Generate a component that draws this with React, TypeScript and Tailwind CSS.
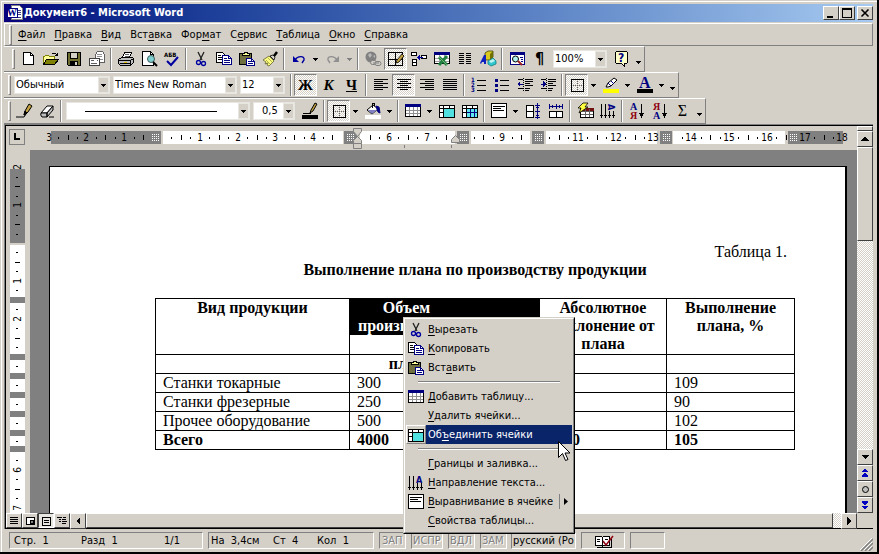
import type { ReactNode } from 'react'
import { clsx } from 'clsx'

const RAISED = 'border border-t-white border-l-white border-r-[#404040] border-b-[#404040]'
const DITHER =
  'bg-[conic-gradient(#fff_25%,#d4d0c8_0_50%,#fff_0_75%,#d4d0c8_0)] bg-[length:2px_2px]'

function Icon({ children, smooth }: { children: ReactNode; smooth?: boolean }) {
  return (
    <svg
      viewBox="0 0 16 16"
      className="w-4 h-4 shrink-0 overflow-visible"
      fill="none"
      stroke="#000"
      shapeRendering={smooth ? 'auto' : 'crispEdges'}
      aria-hidden="true"
    >
      {children}
    </svg>
  )
}

const NewIcon = () => (
  <Icon>
    <path d="M3.5 1.5h7l3 3v9h-10z" fill="#fff" />
    <path d="M10.5 1.5v3h3" />
  </Icon>
)

const OpenIcon = () => (
  <Icon>
    <path d="M.5 13.5v-8h1l1-1h3l1 1h5v3" fill="#ffff99" stroke="#808000" />
    <path d="M.5 13.5l3-5h12l-4 5z" fill="#808000" />
    <path d="M8.5 3.5l1-1h3l1 1v1M14.5 1.5v3h-3" />
  </Icon>
)

const SaveIcon = () => (
  <Icon>
    <path d="M1.5 1.5h13v13h-12l-1-1z" fill="#706f30" />
    <path d="M4.5 1.5h7v6h-7z" fill="#d4d0c8" />
    <path d="M4 10h8v4h-8z" fill="#000" stroke="none" />
    <path d="M9 11h2v3h-2z" fill="#d4d0c8" stroke="none" />
  </Icon>
)

const MailIcon = () => (
  <Icon>
    <path d="M6.5 7.5v-4l2-3h5l2 3v8h-9z" fill="#fff" stroke="#606060" />
    <path d="M8 3.5h5M8 5.5h5M11 8.5h3" stroke="#909090" />
    <path d="M.5 7.5h10v7h-10z" fill="#fff" stroke="#404040" />
    <path d="M2 9.5h3M2 12.5h6M8 9.5h1" stroke="#606060" />
  </Icon>
)

const PrintIcon = () => (
  <Icon>
    <path d="M4.5 6.5l2-5h7l-2 5z" fill="#fff" />
    <path d="M7 3.5h4M6.5 5.5h4" stroke="#606060" />
    <path d="M.5 8.5l3-2h11l1 1v4l-3 3h-10l-2-2z" fill="#c0c0c0" />
    <path d="M1 9.5h11v4M12.5 9.5l3-2M2 12.5h10" />
    <path d="M6 11.5h3" stroke="#e0c000" />
  </Icon>
)

const PreviewIcon = () => (
  <Icon>
    <path d="M1.5.5h8l3 3v11h-11z" fill="#fff" />
    <path d="M9.5.5v3h3" />
    <circle cx="10" cy="8" r="3.5" fill="#80d0d0" stroke="#406060" shapeRendering="auto" />
    <path d="M12 11l4 4" strokeWidth="2" shapeRendering="auto" />
  </Icon>
)

const SpellIcon = () => (
  <Icon smooth>
    <text x="0" y="6" fontSize="6" fontWeight="bold" fill="#000" stroke="none">
      АБВ
    </text>
    <path d="M3 10l4 4 7-8" stroke="#0000a0" strokeWidth="2" />
  </Icon>
)

const CutIcon = () => (
  <Icon smooth>
    <path d="M5 1l4 8M11 1l-4 8" stroke="#202020" strokeWidth="1.3" />
    <circle cx="5.5" cy="11.5" r="2" stroke="#0000a0" strokeWidth="1.3" />
    <circle cx="10.5" cy="12.5" r="2" stroke="#0000a0" strokeWidth="1.3" />
  </Icon>
)

const CopyIcon = () => (
  <Icon>
    <path d="M.5 1.5h6l2 2v8h-8z" fill="#fff" />
    <path d="M2 4.5h3M2 6.5h4M2 8.5h4" />
    <path d="M6.5 4.5h6l3 3v6h-9z" fill="#fff" stroke="#000080" />
    <path d="M12.5 4.5v3h3M8 7.5h3M8 9.5h6M8 11.5h6" stroke="#000080" />
  </Icon>
)

const PasteIcon = () => (
  <Icon>
    <path d="M.5 2.5h12v11h-12z" fill="#706f40" />
    <path d="M3.5 4.5v-2h2v-1h3v1h2v2z" fill="#ffff99" />
    <path d="M7.5 7.5h5l3 3v4h-8z" fill="#fff" stroke="#000080" />
    <path d="M9 10.5h3M9 12.5h5M12.5 7.5v3h3" stroke="#000080" />
  </Icon>
)

const BrushIcon = () => (
  <Icon smooth>
    <path d="M1 9l6-4 5 5-5 5-2-1 1-2-3 1 1-2z" fill="#ffff80" stroke="#606030" strokeWidth=".8" />
    <path d="M4 9l4 4M6 7l4 4" stroke="#a0a040" strokeWidth=".8" />
    <path d="M8 5l4 4 1-3-2-2z" fill="#d4d0c8" stroke="#000" strokeWidth=".8" />
    <path d="M12 5l3-4" strokeWidth="2.5" />
  </Icon>
)

function TurnIcon({ color, flip }: { color: string; flip?: boolean }) {
  return (
    <Icon smooth>
      <g transform={flip ? 'matrix(-1 0 0 1 16 0)' : undefined} stroke={color}>
        <path d="M4 9c3-5 10-4 9 0l-2 3" strokeWidth="1.4" />
        <path d="M2 5v6h6z" fill={color} stroke="none" />
      </g>
    </Icon>
  )
}

const LinkIcon = () => (
  <Icon smooth>
    <circle cx="6" cy="6" r="5.5" fill="#808080" stroke="none" />
    <path d="M3 4l2-2 2 2-2 3zM8 5l2-1v3z" fill="#b8b8b8" stroke="none" />
    <rect x="5.5" y="9.5" width="6" height="4" rx="2" fill="#d4d0c8" stroke="#808080" />
    <rect x="10" y="10.5" width="6" height="4" rx="2" fill="#d4d0c8" stroke="#808080" />
    <path d="M8 12h6" stroke="#808080" />
  </Icon>
)

const DrawTableIcon = () => (
  <Icon>
    <path d="M.5 1.5h14v13h-14zM.5 8.5h14M7.5 1.5v13" />
    <path d="M8 12l1-3 5-6 2 2-5 6z" fill="#c0a040" stroke="#000" strokeWidth=".8" shapeRendering="auto" />
  </Icon>
)

const InsertRowsIcon = () => (
  <Icon>
    <path d="M.5 1.5h5v3h-5zM1.5 8.5h4v3h-4zM1.5 11.5h4v3h-4z" fill="#fff" />
    <path d="M10.5 4.5h5v3h-5z" fill="#fff" />
    <path d="M7 6.5h5" stroke="#0000a0" />
    <path d="M6 6.5l3-3v6z" fill="#0000a0" stroke="none" />
  </Icon>
)

const ExcelIcon = () => (
  <Icon>
    <path d="M.5 1.5h15v11h-15z" fill="#fff" />
    <path d="M0 1h16v3h-16z" fill="#000080" stroke="none" />
    <path d="M1 7.5h14M1 10.5h14M5.5 4v8M10.5 4v8" stroke="#a0a0a0" />
    <path d="M5 6l8 8M13 5l-8 9" stroke="#208040" strokeWidth="3" shapeRendering="auto" />
    <path d="M5 6l8 8" stroke="#70b070" shapeRendering="auto" />
  </Icon>
)

const ColumnsIcon = () => (
  <Icon>
    <path d="M2 2.5h5M2 4.5h5M2 6.5h5M2 8.5h5M2 10.5h5M2 12.5h5M9 2.5h5M9 4.5h5M9 6.5h5M9 8.5h5M9 10.5h5M9 12.5h5" />
  </Icon>
)

const DrawingIcon = () => (
  <Icon smooth>
    <path d="M5 2l3-2h5v6l-3 3h-5z" fill="#d8c820" stroke="#404000" strokeWidth=".8" />
    <path d="M10 3l3-3v6l-3 3z" fill="#707000" stroke="none" />
    <path d="M0 12l4-8h2v9h-2v-2h-2l-1 2z" fill="#1020c0" stroke="none" />
    <path d="M8 10l5-3 3 3v3l-5 2-3-2z" fill="#30c8d0" stroke="#108080" strokeWidth=".8" />
    <path d="M9 10l4-2 2 2-4 2z" fill="#c0f0f0" stroke="none" />
  </Icon>
)

const DocMapIcon = () => (
  <Icon>
    <path d="M1.5 1.5h14v12h-14z" fill="#fff" stroke="#000080" />
    <path d="M1 1h15v3h-15z" fill="#000080" stroke="none" />
    <path d="M11 6.5h3M12 8.5h2M12 10.5h2" stroke="#000080" />
    <circle cx="6.5" cy="8" r="3" fill="#b0f0f0" shapeRendering="auto" />
    <path d="M9 10l4 4" stroke="#a02020" strokeWidth="2" shapeRendering="auto" />
  </Icon>
)

const HelpIcon = () => (
  <Icon>
    <path d="M2.5.5h10l1 1v10l-1 1h-2v3l-3-3h-5l-1-1v-10z" fill="#ffffcc" />
    <text x="4" y="11" fontSize="12" fontWeight="bold" fill="#000080" stroke="none">
      ?
    </text>
  </Icon>
)

function LinesIcon({ rows }: { rows: [number, number][] }) {
  return (
    <Icon>
      {rows.map(([x, w], i) => (
        <path key={i} d={`M${x} ${i * 2 + 2.5}h${w}`} />
      ))}
    </Icon>
  )
}

const NumberedIcon = () => (
  <Icon>
    <path d="M6 3.5h9M6 8.5h9M6 13.5h9" />
    <g fontSize="6" fontWeight="bold" fill="#000080" stroke="none">
      <text x="0" y="5">1</text>
      <text x="0" y="10">2</text>
      <text x="0" y="15">3</text>
    </g>
  </Icon>
)

const BulletsIcon = () => (
  <Icon>
    <path d="M6 3.5h9M6 8.5h9M6 13.5h9" />
    <path d="M1 2h3v3h-3zM1 7h3v3h-3zM1 12h3v3h-3z" fill="#000080" stroke="none" />
  </Icon>
)

function IndentIcon({ right }: { right?: boolean }) {
  return (
    <Icon>
      <path d="M1 2.5h5M8 2.5h8M8 4.5h8M8 6.5h5M8 8.5h8M1 11.5h5M8 11.5h5M8 13.5h4" />
      <path d="M6.5 1v14" strokeDasharray="1 1" />
      <path d="M1 7h5" stroke="#000080" />
      <path d={right ? 'M6 7l-3-3v6z' : 'M0 7l3-3v6z'} fill="#000080" stroke="none" />
    </Icon>
  )
}

const BordersIcon = () => (
  <Icon>
    <path d="M2.5 2.5h12v12h-12z" />
    <path d="M8.5 4v10M4 8.5h10" stroke="#606060" strokeDasharray="1 1" />
  </Icon>
)

const HighlightIcon = () => (
  <Icon>
    <path d="M0 12h16v4h-16z" fill="#ffff00" stroke="none" />
    <path d="M3 10l2-4 6-5 3 2-6 6-3 1z" fill="#fff" stroke="#000" shapeRendering="auto" />
    <path d="M5 6l3 3M8 4l3 3" stroke="#000080" shapeRendering="auto" />
  </Icon>
)

const FontColorIcon = () => (
  <Icon>
    <path d="M0 12h16v4h-16z" fill="#000" stroke="none" />
    <text x="2" y="11" fontSize="16" fontWeight="bold" fontFamily="Liberation Serif" fill="#000080" stroke="none">
      А
    </text>
  </Icon>
)

const PencilIcon = () => (
  <Icon smooth>
    <path d="M8 12l1-4 4-7 3 2-4 6-3 3z" fill="#c0a040" />
    <path d="M8 12l1-4 2 2z" fill="#000" />
    <path d="M0 14h8l2-3" />
  </Icon>
)

const EraserIcon = () => (
  <Icon smooth>
    <path d="M2 10l6-7h6l-6 7z" fill="#fff" />
    <path d="M2 10h6v4h-5q-2-2-1-4zM8 10l6-7v4l-6 7z" fill="#c0c0c0" />
    <path d="M10 14h5" />
  </Icon>
)

const PenColorIcon = () => (
  <Icon>
    <path d="M0 12h16v4h-16z" fill="#000" stroke="none" />
    <path d="M1 10.5h8" />
    <path d="M8 10l1-3 4-7 2 1-4 7z" fill="#c0a040" shapeRendering="auto" />
  </Icon>
)

const FillIcon = () => (
  <Icon>
    <path d="M0 12h16v4h-16z" fill="#fff" stroke="none" />
    <path d="M2 7l6-5 5 4-6 5z" fill="#fff" shapeRendering="auto" />
    <path d="M3 7h9l-5 4z" fill="#8080c0" stroke="none" shapeRendering="auto" />
    <path d="M7 5v-5h2v3" />
    <path d="M11 3l3 1 1 6-2-1-1-3z" fill="#000080" stroke="#000080" shapeRendering="auto" />
  </Icon>
)

const TableIcon = () => (
  <Icon>
    <path d="M.5 1.5h15v12h-15z" fill="#fff" />
    <path d="M0 1h16v3h-16z" fill="#000080" stroke="none" />
    <path d="M1 7.5h14M1 10.5h14M4.5 4v9M8.5 4v9M12.5 4v9" stroke="#909090" />
  </Icon>
)

const MergeIcon = () => (
  <Icon>
    <path d="M.5 2.5h15v12h-15z" fill="#fff" />
    <path d="M.5 5.5h15M4.5 2.5v12M10.5 2v3M1 9.5h3" />
    <path d="M5 6h10v8h-10z" fill="#50e0e0" stroke="none" />
  </Icon>
)

const SplitIcon = () => (
  <Icon>
    <path d="M.5 2.5h15v12h-15z" fill="#fff" />
    <path d="M5 6h10v8h-10z" fill="#60e8f0" stroke="none" />
    <path d="M.5 5.5h15M4.5 2.5v12M10.5 2v3M1 9.5h3" />
    <path d="M5 9.5h10M8.5 6v8M12.5 6v8" stroke="#000080" />
  </Icon>
)

const CellAlignIcon = () => (
  <Icon>
    <path d="M.5.5h15v14h-15z" fill="#fff" />
    <path d="M2 3.5h12M2 5.5h8M2 7.5h11" />
  </Icon>
)

const EvenRowsIcon = () => (
  <Icon>
    <path d="M1.5 2.5h7v12h-7zM1.5 8.5h7" fill="#fff" />
    <path d="M10 2.5h5M10 8.5h5M10 14.5h5M12.5 0v16" stroke="#000080" />
    <path d="M11 4.5h3M11 12.5h3" stroke="#000080" />
  </Icon>
)

const EvenColumnsIcon = () => (
  <Icon>
    <path d="M1.5 8.5h13v6h-13zM8.5 8.5v6" fill="#fff" />
    <path d="M1.5 1v5M8.5 1v5M14.5 1v5M2 3.5h12M4.5 2v3M11.5 2v3" stroke="#000080" />
  </Icon>
)

const AutoFormatIcon = () => (
  <Icon>
    <path d="M3.5 5.5h13v9h-13z" fill="#fff" />
    <path d="M4 5h13v3h-13z" fill="#701010" stroke="none" />
    <path d="M4 8.5h12M4 11.5h12M8.5 6v8M12.5 6v8" stroke="#606060" />
    <path d="M6 0h5l-3 4h3l-9 6 2-5h-3z" fill="#ffff40" strokeWidth=".8" shapeRendering="auto" />
  </Icon>
)

function DirectionIcon({ turned }: { turned?: boolean }) {
  return (
    <Icon>
      <path d="M1.5 1v12M5.5 1v12M9.5 8v5M13.5 8v5" />
      <path d="M0 12h3l-1.5 3zM4 12h3l-1.5 3zM8 12h3l-1.5 3zM12 12h3l-1.5 3z" fill="#000" stroke="none" />
      <text
        transform={turned ? 'translate(8 1) rotate(90)' : 'translate(8 8)'}
        fontSize="9"
        fontWeight="bold"
        fill="#000080"
        stroke="none"
      >
        А
      </text>
    </Icon>
  )
}

function SortIcon({ top, bottom }: { top: string; bottom: string }) {
  return (
    <Icon>
      <g fontSize="10" fontWeight="bold" fontFamily="Liberation Serif" stroke="none">
        <text x="1" y="7" fill={top === 'А' ? '#000080' : '#900010'}>
          {top}
        </text>
        <text x="1" y="16" fill={bottom === 'А' ? '#000080' : '#900010'}>
          {bottom}
        </text>
      </g>
      <path d="M12.5 1v11" />
      <path d="M10 10h5l-2.5 5z" fill="#000" stroke="none" />
    </Icon>
  )
}

function Arrow({ light }: { light?: boolean }) {
  return (
    <svg viewBox="0 0 5 3" className="w-[5px] h-[3px]" shapeRendering="crispEdges" aria-hidden="true">
      <path d="M0 0h5v1h-1v1h-1v1h-1v-1h-1v-1h-1z" fill={light ? '#808080' : '#000'} />
    </svg>
  )
}

function Tool({ label, pressed, children }: { label: string; pressed?: boolean; children: ReactNode }) {
  return (
    <button
      type="button"
      aria-label={label}
      aria-pressed={pressed}
      className={clsx(
        'w-[23px] h-[22px] flex items-center justify-center border shrink-0',
        pressed
          ? `border-t-[#808080] border-l-[#808080] border-r-white border-b-white ${DITHER}`
          : 'border-transparent',
      )}
    >
      {children}
    </button>
  )
}

function Drop({ label, light }: { label: string; light?: boolean }) {
  return (
    <button type="button" aria-label={label} className="w-[11px] h-[22px] flex items-center justify-center shrink-0">
      <Arrow light={light} />
    </button>
  )
}

const Sep = () => <span className="w-0.5 h-[22px] mx-0.5 shrink-0 border-l border-[#808080] border-r border-r-white" />

const Grip = () => (
  <span className="w-[3px] h-[20px] mr-px shrink-0 border border-t-white border-l-white border-r-[#808080] border-b-[#808080]" />
)

const More = () => (
  <button type="button" aria-label="Другие кнопки" className="w-[11px] h-[22px] flex items-end justify-center pb-1.5">
    <Arrow />
  </button>
)

function Bar({ label, children }: { label: string; children: ReactNode }) {
  return (
    <div
      role="toolbar"
      aria-label={label}
      className="w-fit h-[26px] flex items-center pl-1 border-t border-r border-b border-t-white border-r-[#808080] border-b-[#808080]"
    >
      {children}
    </div>
  )
}

function Combo({
  label,
  value,
  className,
  children,
}: {
  label: string
  value: string
  className: string
  children?: ReactNode
}) {
  return (
    <label className={clsx('grid h-[18px] mr-[3px] shrink-0 bg-white border border-[#e8e6e0]', className)}>
      <select aria-label={label} className="appearance-none col-start-1 row-start-1 pl-px w-full outline-none">
        <option>{value}</option>
      </select>
      {children}
      <span className="col-start-1 row-start-1 justify-self-end w-[11px] bg-[#d4d0c8] border border-[#e8e6e0] flex items-center justify-center pointer-events-none">
        <Arrow />
      </span>
    </label>
  )
}

// Marks the access key of a caption, e.g. "Вст_авка"
function Caption({ text }: { text: string }) {
  const at = text.indexOf('_')
  return (
    <span className="whitespace-pre">
      {text.slice(0, at)}
      <u className="underline-offset-2">{text[at + 1]}</u>
      {text.slice(at + 2)}
    </span>
  )
}

const menus = ['_Файл', '_Правка', '_Вид', 'Вст_авка', 'Фор_мат', 'С_ервис', '_Таблица', '_Окно', '_Справка']

function TitleBar() {
  const box = `w-4 h-[14px] bg-[#d4d0c8] flex items-center justify-center ${RAISED}`
  return (
    <header className="h-[18px] flex items-center pl-[3px] bg-linear-to-r from-[#08007c] to-[#a6caf0] text-white">
      <Icon>
        <path d="M4.5.5h8l3 3v11h-11z" fill="#fff" stroke="#808080" />
        <path d="M10 5.5h4M10 7.5h4M10 9.5h4M6 12.5h8" stroke="#404080" />
        <path d="M0 3h10v9h-10z" fill="#fff" stroke="#000080" />
        <text x="0" y="11" fontSize="10" fontWeight="bold" fontFamily="Liberation Serif" fill="#000080" stroke="none">
          W
        </text>
      </Icon>
      <h1 className="flex-1 pl-px font-bold">Документ6 - Microsoft Word</h1>
      <button type="button" aria-label="Свернуть" className={box}>
        <Icon>
          <path d="M4 11h6v2h-6z" fill="#000" stroke="none" />
        </Icon>
      </button>
      <button type="button" aria-label="Развернуть" className={box}>
        <Icon>
          <path d="M3.5 3.5h9v9h-9zM3 4.5h10" />
        </Icon>
      </button>
      <button type="button" aria-label="Закрыть" className={`ml-0.5 ${box}`}>
        <Icon smooth>
          <path d="M4.5 4.5l7 7M11.5 4.5l-7 7" strokeWidth="1.6" />
        </Icon>
      </button>
    </header>
  )
}

function Toolbars() {
  return (
    <>
      <Bar label="Стандартная">
        <span className="w-1" />
        <Grip />
        <Tool label="Создать"><NewIcon /></Tool>
        <Tool label="Открыть"><OpenIcon /></Tool>
        <Tool label="Сохранить"><SaveIcon /></Tool>
        <Tool label="Сообщение"><MailIcon /></Tool>
        <Sep />
        <Tool label="Печать"><PrintIcon /></Tool>
        <Tool label="Просмотр"><PreviewIcon /></Tool>
        <Tool label="Правописание"><SpellIcon /></Tool>
        <Sep />
        <Tool label="Вырезать"><CutIcon /></Tool>
        <Tool label="Копировать"><CopyIcon /></Tool>
        <Tool label="Вставить"><PasteIcon /></Tool>
        <Tool label="Формат по образцу"><BrushIcon /></Tool>
        <Sep />
        <Tool label="Отменить"><TurnIcon color="#0000a0" /></Tool>
        <Drop label="Список отмены" />
        <Tool label="Вернуть"><TurnIcon color="#909090" flip /></Tool>
        <Drop label="Список возврата" light />
        <Sep />
        <Tool label="Гиперссылка"><LinkIcon /></Tool>
        <Tool label="Таблицы и границы" pressed><DrawTableIcon /></Tool>
        <Tool label="Добавить строки"><InsertRowsIcon /></Tool>
        <Tool label="Таблица Excel"><ExcelIcon /></Tool>
        <Tool label="Колонки"><ColumnsIcon /></Tool>
        <Tool label="Рисование"><DrawingIcon /></Tool>
        <Sep />
        <Tool label="Схема документа"><DocMapIcon /></Tool>
        <Tool label="Непечатаемые знаки"><span className="text-[16px] font-bold">¶</span></Tool>
        <span className="w-0.5" />
        <Combo label="Масштаб" value="100%" className="w-[54px]" />
        <Tool label="Справка"><HelpIcon /></Tool>
        <More />
      </Bar>

      <Bar label="Форматирование">
        <Grip />
        <span className="w-0.5" />
        <Combo label="Стиль" value="Обычный" className="w-[96px]" />
        <Combo label="Шрифт" value="Times New Roman" className="w-[124px]" />
        <Combo label="Размер" value="12" className="w-[45px]" />
        <Sep />
        <Tool label="Полужирный" pressed><b className="text-[15px] font-[Liberation_Serif]">Ж</b></Tool>
        <Tool label="Курсив"><b className="text-[15px] italic font-[Liberation_Serif]">К</b></Tool>
        <Tool label="Подчеркнутый"><b className="text-[15px] underline font-[Liberation_Serif]">Ч</b></Tool>
        <Sep />
        <Tool label="По левому краю">
          <LinesIcon rows={[[1, 14], [1, 9], [1, 14], [1, 9], [1, 14], [1, 9]]} />
        </Tool>
        <Tool label="По центру" pressed>
          <LinesIcon rows={[[1, 14], [4, 8], [1, 14], [4, 8], [1, 14], [4, 8]]} />
        </Tool>
        <Tool label="По правому краю">
          <LinesIcon rows={[[1, 14], [6, 9], [1, 14], [6, 9], [1, 14], [6, 9]]} />
        </Tool>
        <Tool label="По ширине">
          <LinesIcon rows={[[1, 14], [1, 14], [1, 14], [1, 14], [1, 14], [1, 14]]} />
        </Tool>
        <Sep />
        <Tool label="Нумерация"><NumberedIcon /></Tool>
        <Tool label="Маркеры"><BulletsIcon /></Tool>
        <Tool label="Уменьшить отступ"><IndentIcon /></Tool>
        <Tool label="Увеличить отступ"><IndentIcon right /></Tool>
        <Sep />
        <Tool label="Внешние границы" pressed><BordersIcon /></Tool>
        <Drop label="Виды границ" />
        <Tool label="Выделение цветом"><HighlightIcon /></Tool>
        <Drop label="Цвет выделения" />
        <Tool label="Цвет шрифта"><FontColorIcon /></Tool>
        <Drop label="Выбор цвета шрифта" />
        <More />
      </Bar>

      <Bar label="Таблицы и границы">
        <Grip />
        <Tool label="Нарисовать таблицу"><PencilIcon /></Tool>
        <Tool label="Ластик"><EraserIcon /></Tool>
        <Sep />
        <span className="w-0.5" />
        <Combo label="Тип линии" value="" className="w-[184px]">
          <span className="col-start-1 row-start-1 self-center h-px ml-[18px] mr-8 bg-black pointer-events-none" />
        </Combo>
        <Combo label="Толщина линии" value="0,5" className="w-[42px] [&_select]:pl-2" />
        <Tool label="Цвет границы"><PenColorIcon /></Tool>
        <Sep />
        <Tool label="Границы" pressed><BordersIcon /></Tool>
        <Drop label="Выбор границ" />
        <Tool label="Цвет заливки"><FillIcon /></Tool>
        <Drop label="Выбор заливки" />
        <Sep />
        <Tool label="Добавить таблицу"><TableIcon /></Tool>
        <Drop label="Варианты добавления" />
        <Tool label="Объединить ячейки"><MergeIcon /></Tool>
        <Tool label="Разбить ячейки"><SplitIcon /></Tool>
        <Sep />
        <Tool label="Выравнивание"><CellAlignIcon /></Tool>
        <Drop label="Варианты выравнивания" />
        <Tool label="Выровнять высоту строк"><EvenRowsIcon /></Tool>
        <Tool label="Выровнять ширину столбцов"><EvenColumnsIcon /></Tool>
        <Sep />
        <Tool label="Автоформат"><AutoFormatIcon /></Tool>
        <Tool label="Направление текста"><DirectionIcon turned /></Tool>
        <Sep />
        <Tool label="По возрастанию"><SortIcon top="А" bottom="Я" /></Tool>
        <Tool label="По убыванию"><SortIcon top="Я" bottom="А" /></Tool>
        <Tool label="Автосумма"><span className="text-[16px] font-[Liberation_Serif]">Σ</span></Tool>
        <More />
      </Bar>
    </>
  )
}

// One centimetre of the ruler, in pixels
const CM = 37.8

function Grid({ x }: { x: number }) {
  return (
    <path
      d={`M${x} 8.5h8M${x} 10.5h8M${x} 12.5h8M${x} 14.5h8`}
      stroke="#fff"
      strokeDasharray="1 1"
      shapeRendering="crispEdges"
    />
  )
}

function HorizontalRuler() {
  const zero = 132
  const white = [[133, 180], [330, 95], [441, 59], [516, 111], [643, 112]]
  const gray = [[21, 110], [314, 14], [427, 12], [502, 12], [630, 12], [758, 55]]
  const hidden = [[121, 135], [312, 338], [420, 440], [500, 516], [630, 642], [758, 768]]
  const marks = Array.from({ length: 85 }, (_, i) => i - 12)
  return (
    <svg className="flex-1 h-6" aria-hidden="true">
      {white.map(([x, w]) => <rect key={x} x={x} y="5" width={w} height="13" fill="#fff" />)}
      {gray.map(([x, w]) => <rect key={x} x={x} y="5" width={w} height="13" fill="#808080" />)}
      {marks.map((i) => {
        const x = Math.round(zero + (i * CM) / 4)
        if (hidden.some(([a, b]) => x >= a && x <= b)) return null
        if (i % 4 === 0) {
          return <text key={i} x={x} y="15" fontSize="10" textAnchor="middle">{Math.abs(i / 4)}</text>
        }
        return i % 2 === 0
          ? <rect key={i} x={x} y="9" width="1" height="5" />
          : <rect key={i} x={x} y="11" width="1" height="2" />
      })}
      {[122, 317, 430, 505, 633, 760].map((x) => <Grid key={x} x={x} />)}
      <g fill="#d4d0c8" stroke="#808080">
        <path d="M323.5 2.5h8v3l-4 5 4 4v3h-8v-3l4-4-4-5z" />
        <path d="M323.5 17.5h8v5h-8z" />
        <path d="M421.5 16.5v-3l4-4 4 4v3z" />
      </g>
      <path d="M374.5 19v3M421.5 19v3" stroke="#808080" />
    </svg>
  )
}

function VerticalRuler() {
  const zero = 93
  const bars = [147, 204, 223, 242, 261, 280, 296]
  const marks = Array.from({ length: 37 }, (_, i) => i - 8)
  return (
    <svg className="w-[15px] h-full overflow-visible" aria-hidden="true">
      <rect y="19" width="15" height="74" fill="#808080" />
      <rect y="95" width="15" height="268" fill="#fff" />
      {marks.map((i) => {
        const y = Math.round(zero + (i * CM) / 4)
        if (i === 0 || bars.some((b) => y >= b - 2 && y <= b + 7)) return null
        if (i % 4 === 0) {
          return (
            <text key={i} transform={`translate(11 ${y}) rotate(-90)`} fontSize="10" textAnchor="middle">
              {Math.abs(i / 4)}
            </text>
          )
        }
        return i % 2 === 0
          ? <rect key={i} x="5" y={y} width="5" height="1" />
          : <rect key={i} x="6" y={y} width="2" height="1" />
      })}
      {bars.map((y) => <rect key={y} y={y} width="15" height="6" fill="#808080" />)}
    </svg>
  )
}

const rows = [
  ['Станки токарные', '300', '', '', '109'],
  ['Станки фрезерные', '250', '', '', '90'],
  ['Прочее оборудование', '500', '', '', '102'],
  ['Всего', '4000', '', '+200', '105'],
]

function Page() {
  const cell = 'border border-black align-top p-0'
  return (
    <main className="flex-1 ml-[19px] mr-[11px] mt-4 pt-[76px] pl-[105px] pr-[50px] bg-white border-t border-l border-r-2 border-black font-[Liberation_Serif] text-[16px] leading-[18px]">
      <p className="text-right pr-2">Таблица 1.</p>
      <h2 className="text-center font-bold mb-[19px]">Выполнение плана по производству продукции</h2>
      <table className="w-full table-fixed border-collapse">
        <colgroup>
          <col className="w-[194px]" />
          <col className="w-[114px]" />
          <col className="w-[76px]" />
          <col className="w-[127px]" />
          <col className="w-[128px]" />
        </colgroup>
        <thead>
          <tr className="h-14">
            <th className={cell}>Вид продукции</th>
            <th className={`${cell} text-white`}>
              <div className="bg-black h-9 overflow-hidden px-2">Объем производства</div>
            </th>
            <th className={cell}>
              <div className="bg-black h-9" />
            </th>
            <th className={cell}>Абсолютное отклонение от плана</th>
            <th className={`${cell} px-2`}>Выполнение плана, %</th>
          </tr>
          <tr className="h-[19px]">
            <th className={cell} />
            <th className={cell}>план</th>
            <th className={cell} />
            <th className={cell} />
            <th className={cell} />
          </tr>
        </thead>
        <tbody>
          {rows.map((row) => (
            <tr key={row[0]} className="h-[19px] last:font-bold">
              {row.map((value, i) => (
                <td key={i} className={`${cell} pl-[7px]`}>{value}</td>
              ))}
            </tr>
          ))}
        </tbody>
      </table>
    </main>
  )
}

function ScrollButton({ label, d, color = '#000' }: { label: string; d: string; color?: string }) {
  return (
    <button
      type="button"
      aria-label={label}
      className={`w-4 h-4 shrink-0 bg-[#d4d0c8] flex items-center justify-center ${RAISED}`}
    >
      <Icon>
        <path d={d} fill={color} stroke="none" />
      </Icon>
    </button>
  )
}

function VerticalScroll() {
  return (
    <div className={`w-4 shrink-0 flex flex-col ${DITHER}`}>
      <div className={`h-[5px] shrink-0 bg-[#d4d0c8] ${RAISED}`} />
      <ScrollButton label="Вверх" d="M8 5l4 5h-8z" />
      <div className={`h-[94px] shrink-0 bg-[#d4d0c8] ${RAISED}`} />
      <div className="flex-1" />
      <ScrollButton label="Вниз" d="M4 6h8l-4 4z" />
      <ScrollButton label="Предыдущая страница" d="M8 3l3 4h-6zM8 7l3 4h-6zM5 11h6v1h-6z" color="#0000c0" />
      <button
        type="button"
        aria-label="Выбор объекта перехода"
        className={`w-4 h-4 shrink-0 bg-[#d4d0c8] flex items-center justify-center ${RAISED}`}
      >
        <span className="w-[7px] h-[7px] rounded-full border border-black bg-[#c0c0c0]" />
      </button>
      <ScrollButton label="Следующая страница" d="M5 4h6v1h-6zM5 5h6l-3 4zM5 9h6l-3 4z" color="#0000c0" />
    </div>
  )
}

function ViewButton({ label, on, children }: { label: string; on?: boolean; children: ReactNode }) {
  return (
    <button
      type="button"
      aria-label={label}
      aria-pressed={on}
      className={clsx(
        'w-4 h-[15px] flex items-center justify-center',
        on ? 'border border-t-[#404040] border-l-[#404040] border-r-white border-b-white bg-[#e8e6e0]' : RAISED,
      )}
    >
      <Icon>{children}</Icon>
    </button>
  )
}

function HorizontalScroll() {
  return (
    <div className="h-[15px] shrink-0 flex">
      <ViewButton label="Обычный режим"><path d="M4 4.5h8M4 6.5h8M4 8.5h8M4 10.5h8" /></ViewButton>
      <ViewButton label="Веб-документ">
        <path d="M4.5 4.5h8v7h-8z" fill="#fff" />
        <circle cx="10" cy="9" r="2" fill="#808080" />
      </ViewButton>
      <ViewButton label="Разметка страницы" on>
        <path d="M4.5 4.5h8v8h-8zM6 7.5h5M6 9.5h5" />
      </ViewButton>
      <ViewButton label="Структура">
        <path d="M3 4.5h5M9 4.5h3M5 6.5h2M8 6.5h4M5 8.5h2M8 8.5h5M8 10.5h4" />
      </ViewButton>
      <ScrollButton label="Влево" d="M10 4v8l-4-4z" />
      <div className={`flex-1 bg-[#d4d0c8] ${RAISED}`} />
      <div className={`w-2 ${DITHER}`} />
      <ScrollButton label="Вправо" d="M6 4v8l4-4z" />
      <div className="w-4" />
    </div>
  )
}

type Entry = { text: string; icon?: ReactNode; active?: boolean; sub?: boolean }

const groups: Entry[][] = [
  [
    { text: '_Вырезать', icon: <CutIcon /> },
    { text: '_Копировать', icon: <CopyIcon /> },
    { text: 'Вст_авить', icon: <PasteIcon /> },
  ],
  [
    { text: '_Добавить таблицу...', icon: <TableIcon /> },
    { text: '_Удалить ячейки...' },
    { text: 'Об_ъединить ячейки', icon: <MergeIcon />, active: true },
  ],
  [
    { text: '_Границы и заливка...' },
    { text: '_Направление текста...', icon: <DirectionIcon /> },
    { text: '_Выравнивание в ячейке', icon: <CellAlignIcon />, sub: true },
    { text: '_Свойства таблицы...' },
  ],
]

function ContextMenu() {
  return (
    <div
      role="menu"
      className="absolute left-[403px] top-[317px] w-[172px] bg-[#d4d0c8] border border-[#d4d0c8] border-r-black border-b-black"
    >
      <div className="p-px pb-0.5 border border-t-white border-l-white border-r-[#808080] border-b-[#808080]">
        {groups.map((group, g) => (
          <div key={g}>
            {g > 0 && <div className="h-0.5 my-1 mx-3 border-t border-[#808080] border-b border-b-white" />}
            {group.map((entry) => (
              <button key={entry.text} type="button" role="menuitem" className="w-full h-[19px] flex items-stretch">
                <span
                  className={clsx(
                    'w-5 flex items-center justify-center border',
                    entry.active
                      ? 'border-t-white border-l-white border-r-[#808080] border-b-[#808080]'
                      : 'border-transparent',
                  )}
                >
                  {entry.icon}
                </span>
                <span
                  className={clsx('flex-1 flex items-center pl-0.5 text-left', entry.active && 'bg-[#0a246a] text-white')}
                >
                  <Caption text={entry.text} />
                  {entry.sub && (
                    <span className="ml-auto h-[15px] flex items-center pl-1 pr-1 border-l border-[#808080]">
                      <svg viewBox="0 0 4 7" className="w-1 h-[7px]" aria-hidden="true">
                        <path d="M0 0l4 3.5-4 3.5z" />
                      </svg>
                    </span>
                  )}
                </span>
              </button>
            ))}
          </div>
        ))}
      </div>
    </div>
  )
}

function Well({ className, off, children }: { className: string; off?: boolean; children?: ReactNode }) {
  return (
    <div
      className={clsx(
        'h-[17px] flex items-center shrink-0 whitespace-nowrap border border-t-[#808080] border-l-[#808080] border-r-white border-b-white',
        off && 'text-[#808080] text-shadow-[1px_1px_0_#fff]',
        className,
      )}
    >
      {children}
    </div>
  )
}

function StatusBar() {
  return (
    <footer className="shrink-0 h-[23px] flex items-center pl-[5px]">
      <Well className="w-[194px] pl-1 mr-[5px]">
        <span className="w-[67px]">Стр.&nbsp; 1</span>
        <span className="w-[83px]">Разд&nbsp; 1</span>
        <span>1/1</span>
      </Well>
      <Well className="w-[166px] pl-0.5 mr-[5px]">
        <span className="w-[62px]">На&nbsp; 3,4см</span>
        <span className="w-11">Ст&nbsp; 4</span>
        <span>Кол&nbsp; 1</span>
      </Well>
      <Well off className="w-[27px] pl-0.5 mr-[5px]">ЗАП</Well>
      <Well off className="w-[32px] pl-px mr-[5px]">ИСПР</Well>
      <Well off className="w-[27px] pl-px mr-[5px]">ВДЛ</Well>
      <Well off className="w-[27px] pl-px mr-1">ЗАМ</Well>
      <Well className="w-[65px] pl-px mr-[5px]">русский (Ро</Well>
      <Well className="w-11 justify-center mr-[5px]">
        <Icon>
          <path d="M.5 3.5h6l1 1 1-1h6v9h-6l-1 1-1-1h-6zM7.5 4v9" fill="#fff" />
          <path d="M2 14.5h14v-9M2 6.5h3M2 8.5h3M10 6.5h3" />
          <path d="M8 8l3 4 7-9" stroke="#900010" strokeWidth="1.5" shapeRendering="auto" />
        </Icon>
      </Well>
      <Well className="w-[35px]" />
      <svg viewBox="0 0 13 13" className="w-[13px] h-[13px] ml-auto mt-2" aria-hidden="true">
        <path d="M1 13L13 1M5 13l8-8M9 13l4-4" stroke="#808080" strokeWidth="1.5" />
        <path d="M0 12L12 0M4 12l8-8M8 12l4-4" stroke="#fff" />
      </svg>
    </footer>
  )
}

export default function App() {
  return (
    <div className="relative h-screen flex flex-col pt-px pl-px bg-[#d4d0c8] border-r-2 border-b-2 border-black font-[DejaVu_Sans_Condensed,DejaVu_Sans,sans-serif] text-[11px] leading-[14px] text-black overflow-hidden">
      <div className="flex-1 min-h-0 flex flex-col pt-0.5 pl-0.5 pr-1 border-t border-l border-white">
        <TitleBar />
        <nav className="mt-px h-[23px] shrink-0 flex items-center gap-px pl-1 border border-white border-b-[#808080] border-r-[#808080]">
          <Grip />
          {menus.map((text) => (
            <button key={text} type="button" className="px-1">
              <Caption text={text} />
            </button>
          ))}
        </nav>
        <Toolbars />

        <div className="flex-1 min-h-0 flex flex-col border-t border-l border-[#808080]">
          <div className="flex-1 min-h-0 flex flex-col border-t border-l border-b border-black">
            <div className="flex-1 min-h-0 flex">
              <div className="flex-1 min-w-0 flex flex-col">
                <div className="h-6 shrink-0 flex">
                  <button
                    type="button"
                    aria-label="Тип табуляции"
                    className="ml-[3px] mt-[3px] mr-[5px] w-4 h-4 flex items-center justify-center border border-[#808080]"
                  >
                    <Icon>
                      <path d="M5 4h2v5h4v2h-6z" fill="#000" stroke="none" />
                    </Icon>
                  </button>
                  <HorizontalRuler />
                </div>
                <div className="flex-1 min-h-0 flex">
                  <div className="w-6 pl-1 shrink-0">
                    <VerticalRuler />
                  </div>
                  <div className="flex-1 min-w-0 flex bg-[#808080]">
                    <Page />
                  </div>
                </div>
              </div>
              <VerticalScroll />
            </div>
            <HorizontalScroll />
          </div>
        </div>
        <StatusBar />
      </div>

      <ContextMenu />
      <svg viewBox="0 0 12 20" className="absolute left-[558px] top-[441px] w-3 h-5" aria-hidden="true">
        <path d="M.5.5v16l4-4 3 7 2.5-1-3-6.5h5z" fill="#fff" stroke="#000" />
      </svg>
    </div>
  )
}
